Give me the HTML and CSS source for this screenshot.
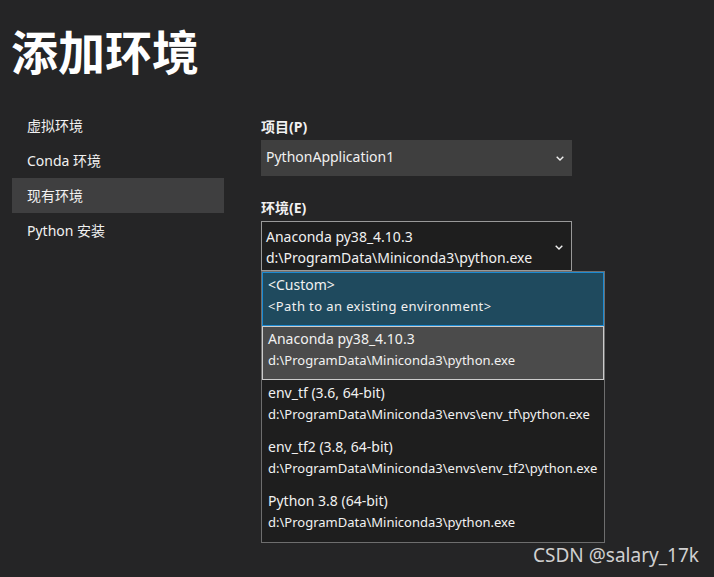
FILE: index.html
```html
<html>
<head>
    <title>添加环境</title>
    <link rel="stylesheet" href="styles.css">
</head>
<body>
<div class="page">
    <h1 class="title">添加环境</h1>
    <div class="layout">
        <ul class="nav">
            <li>虚拟环境</li>
            <li>Conda 环境</li>
            <li class="active">现有环境</li>
            <li>Python 安装</li>
        </ul>
        <div class="content">
            <div class="field">
                <label>项目(P)</label>
                <div class="combo combo-flat">
                    <div class="combo-text">PythonApplication1</div>
                    <svg class="chevron" width="8" height="5" viewBox="0 0 8 5"><polyline points="0.7,0.7 4,4 7.3,0.7" fill="none" stroke="#f1f1f1" stroke-width="1.4"/></svg>
                </div>
            </div>
            <div class="field">
                <label>环境(E)</label>
                <div class="combo-wrap">
                    <div class="combo combo-open">
                        <div class="combo-text">
                            <div class="line">Anaconda py38_4.10.3</div>
                            <div class="line">d:\ProgramData\Miniconda3\python.exe</div>
                        </div>
                        <svg class="chevron" width="8" height="5" viewBox="0 0 8 5"><polyline points="0.7,0.7 4,4 7.3,0.7" fill="none" stroke="#f1f1f1" stroke-width="1.4"/></svg>
                    </div>
                    <ul class="dropdown">
                        <li class="option hover">
                            <div class="name">&lt;Custom&gt;</div>
                            <div class="path spaced">&lt;Path to an existing environment&gt;</div>
                        </li>
                        <li class="option selected">
                            <div class="name">Anaconda py38_4.10.3</div>
                            <div class="path">d:\ProgramData\Miniconda3\python.exe</div>
                        </li>
                        <li class="option">
                            <div class="name">env_tf (3.6, 64-bit)</div>
                            <div class="path">d:\ProgramData\Miniconda3\envs\env_tf\python.exe</div>
                        </li>
                        <li class="option">
                            <div class="name">env_tf2 (3.8, 64-bit)</div>
                            <div class="path">d:\ProgramData\Miniconda3\envs\env_tf2\python.exe</div>
                        </li>
                        <li class="option">
                            <div class="name">Python 3.8 (64-bit)</div>
                            <div class="path">d:\ProgramData\Miniconda3\python.exe</div>
                        </li>
                    </ul>
                </div>
            </div>
        </div>
    </div>
    <div class="watermark">CSDN @salary_17k</div>
</div>
</body>
</html>
```

FILE: styles.css
```css
body {
    margin: 0;
    background: #252526;
    color: #f1f1f1;
    font-family: 'Segoe UI', 'Noto Sans', 'Noto Sans CJK SC', sans-serif;
    font-size: 14px;
}

.page {
    position: relative;
    width: 714px;
    height: 577px;
    overflow: hidden;
}

.title {
    margin: 0;
    padding: 18px 0 0 11px;
    height: 91px;
    box-sizing: border-box;
    font-size: 47px;
    line-height: 64px;
    font-weight: bold;
    color: #ffffff;
    font-family: 'Noto Sans CJK SC', sans-serif;
}

.layout {
    display: flex;
}

.nav {
    list-style: none;
    margin: 17px 0 0 12px;
    padding: 0;
    width: 212px;
}

.nav li {
    height: 35px;
    line-height: 35px;
    padding-left: 15px;
}

.nav li.active {
    background: #3f3f40;
}

.content {
    margin-left: 37px;
    padding-top: 26px;
    width: 344px;
}

.field {
    margin-bottom: 22px;
}

.field label {
    display: block;
    font-weight: bold;
    line-height: 20px;
    margin-bottom: 3px;
}

.combo {
    display: flex;
    align-items: center;
    width: 311px;
    box-sizing: border-box;
}

.combo-flat {
    height: 36px;
    padding: 0 8px 3px 5px;
    background: #3f3f3f;
}

.combo-flat .chevron {
    margin-top: 3px;
}

.combo-open {
    height: 50px;
    padding: 4px 8px 4px 4px;
    border: 1px solid #999999;
    background: #1e1e1e;
    align-items: flex-start;
}

.combo-open .chevron {
    margin-top: 19px;
}

.combo-text {
    flex: 1;
}

.combo-open .line {
    line-height: 21px;
}

.combo-wrap {
    position: relative;
}

.dropdown {
    position: absolute;
    top: 50px;
    left: 0;
    width: 344px;
    box-sizing: border-box;
    list-style: none;
    margin: 0;
    padding: 0;
    background: #1e1e1e;
    border: 1px solid #6e6e6e;
}

.option {
    height: 54px;
    box-sizing: border-box;
    padding: 2px 5px 0;
    border: 1px solid transparent;
}

.option.hover {
    background: #1f4a5e;
    border-color: #1c8ad2;
}

.option.selected {
    background: #4b4b4b;
    border-color: #cccccc;
}

.option .name {
    line-height: 20px;
}

.option .path {
    line-height: 22px;
    font-size: 13px;
}

.option .path.spaced {
    letter-spacing: 0.4px;
}

.watermark {
    position: absolute;
    right: 15px;
    bottom: 9px;
    font-family: 'Noto Sans', sans-serif;
    font-size: 19px;
    color: #d0d0d0;
}
```
